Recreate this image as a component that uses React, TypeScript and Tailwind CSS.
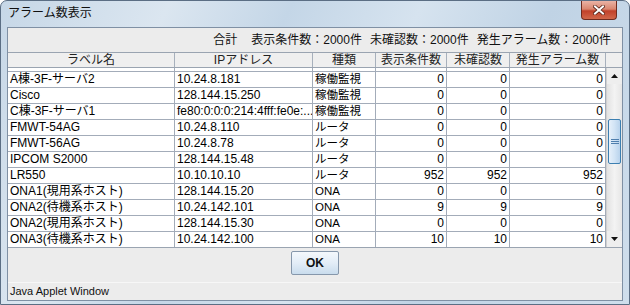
import React from 'react';

interface AlarmRow {
  label: string;
  ip: string;
  kind: string;
  shown: number;
  unconfirmed: number;
  alarms: number;
}

const rows: AlarmRow[] = [
  { label: 'A棟-3F-サーバ2', ip: '10.24.8.79', kind: '稼働監視', shown: 0, unconfirmed: 0, alarms: 0 },
  { label: 'A棟-3F-サーバ2', ip: '10.24.8.181', kind: '稼働監視', shown: 0, unconfirmed: 0, alarms: 0 },
  { label: 'Cisco', ip: '128.144.15.250', kind: '稼働監視', shown: 0, unconfirmed: 0, alarms: 0 },
  { label: 'C棟-3F-サーバ1', ip: 'fe80:0:0:0:214:4fff:fe0e:...', kind: '稼働監視', shown: 0, unconfirmed: 0, alarms: 0 },
  { label: 'FMWT-54AG', ip: '10.24.8.110', kind: 'ルータ', shown: 0, unconfirmed: 0, alarms: 0 },
  { label: 'FMWT-56AG', ip: '10.24.8.78', kind: 'ルータ', shown: 0, unconfirmed: 0, alarms: 0 },
  { label: 'IPCOM S2000', ip: '128.144.15.48', kind: 'ルータ', shown: 0, unconfirmed: 0, alarms: 0 },
  { label: 'LR550', ip: '10.10.10.10', kind: 'ルータ', shown: 952, unconfirmed: 952, alarms: 952 },
  { label: 'ONA1(現用系ホスト)', ip: '128.144.15.20', kind: 'ONA', shown: 0, unconfirmed: 0, alarms: 0 },
  { label: 'ONA2(待機系ホスト)', ip: '10.24.142.101', kind: 'ONA', shown: 9, unconfirmed: 9, alarms: 9 },
  { label: 'ONA2(現用系ホスト)', ip: '128.144.15.30', kind: 'ONA', shown: 0, unconfirmed: 0, alarms: 0 },
  { label: 'ONA3(待機系ホスト)', ip: '10.24.142.100', kind: 'ONA', shown: 10, unconfirmed: 10, alarms: 10 },
];

const headers = ['ラベル名', 'IPアドレス', '種類', '表示条件数', '未確認数', '発生アラーム数'];
const widths = ['w-[167px]', 'w-[138px]', 'w-[63px]', 'w-[71px]', 'w-[63px]', 'w-[96px]'];

const App: React.FC = () => {
  return (
    <div className="w-[630px] h-[305px] flex flex-col rounded-t-[7px] border border-[#5b6e84] bg-[linear-gradient(115deg,#c6d7e7_0%,#dbe6f0_22%,#c4d6e7_38%,#d6e3ef_55%,#c0d3e5_72%,#cfdeec_100%)] font-[family-name:'Liberation_Sans','Noto_Sans_CJK_JP',sans-serif] text-black overflow-hidden">
      {/* title bar */}
      <div className="h-[26px] flex items-start justify-between shrink-0">
        <div className="pl-[7px] pt-[4px] text-[12px] leading-[16px] text-[#101010]">アラーム数表示</div>
        <div className="mr-[12px] w-[36px] h-[19px] rounded-b-[4px] border border-t-0 border-[#6e2b1f] bg-[linear-gradient(180deg,#eab3a5_0%,#d9866f_45%,#c1412a_55%,#d1674a_100%)] flex items-center justify-center">
          <svg width="12" height="10" viewBox="0 0 12 10">
            <path d="M2 1.5 L10 8.5 M10 1.5 L2 8.5" stroke="#5a2418" strokeWidth="3.6" strokeLinecap="square" />
            <path d="M2 1.5 L10 8.5 M10 1.5 L2 8.5" stroke="#ffffff" strokeWidth="2" strokeLinecap="square" />
          </svg>
        </div>
      </div>

      {/* content panel */}
      <div className="mx-[6px] flex-1 flex flex-col border border-[#7f90a4] bg-[#ececec]">
        <div className="h-[24px] flex items-center justify-end pr-[11px] text-[12px] text-[#111]">
          <span className="mr-[14px]">合計</span>
          <div className="flex gap-[8px]">
            <span>表示条件数：2000件</span>
            <span>未確認数：2000件</span>
            <span>発生アラーム数：2000件</span>
          </div>
        </div>

        {/* table */}
        <div className="flex border-t border-[#9aa4b1]">
          <div className="flex flex-col">
            <div className="flex h-[15px] border-b border-[#9aa4b1] bg-[#efefef]">
              {headers.map((h, i) => (
                <div
                  key={h}
                  className={`${widths[i]} border-r border-[#a7b0bc] text-center text-[12px] leading-[14px] text-[#222] overflow-hidden`}
                >
                  {h}
                </div>
              ))}
            </div>
            <div className="h-[179px] overflow-hidden bg-white">
              {rows.map((r, idx) => (
                <div
                  key={idx}
                  className={`flex h-[16px] border-b border-[#a3acb9] text-[12px] leading-[15px] ${idx === 0 ? '-mt-[12px]' : ''}`}
                >
                  <div className="w-[167px] border-r border-[#a3acb9] pl-[2px] whitespace-nowrap overflow-hidden">{r.label}</div>
                  <div className="w-[138px] border-r border-[#a3acb9] pl-[2px] whitespace-nowrap overflow-hidden">{r.ip}</div>
                  <div className="w-[63px] border-r border-[#a3acb9] pl-[2px] whitespace-nowrap overflow-hidden text-[11.5px]">{r.kind}</div>
                  <div className="w-[71px] border-r border-[#a3acb9] pr-[2px] text-right">{r.shown}</div>
                  <div className="w-[63px] border-r border-[#a3acb9] pr-[2px] text-right">{r.unconfirmed}</div>
                  <div className="w-[96px] border-r border-[#a3acb9] pr-[2px] text-right">{r.alarms}</div>
                </div>
              ))}
            </div>
          </div>

          {/* scrollbar column */}
          <div className="w-[16px] flex flex-col">
            <div className="h-[15px] border-b border-[#9aa4b1] bg-[#efefef]" />
            <div className="flex-1 flex flex-col bg-[linear-gradient(90deg,#e2e2e2,#f3f3f3_50%,#e6e6e6)] border-l border-[#d0d0d0]">
              <div className="h-[16px] flex items-center justify-center bg-[#eeeeee]">
                <svg width="7" height="4" viewBox="0 0 7 4">
                  <path d="M0 4 L3.5 0 L7 4 Z" fill="#111" />
                </svg>
              </div>
              <div className="h-[35px]" />
              <div className="h-[45px] mx-[1px] rounded-[2px] border border-[#3c7fb1] bg-[linear-gradient(90deg,#e6f0fa,#d2e4f5_50%,#b9d3ec)] flex items-center justify-center">
                <svg width="8" height="6" viewBox="0 0 8 6">
                  <path d="M0 0.5 H8 M0 2.5 H8 M0 4.5 H8" stroke="#4f7fae" strokeWidth="1" />
                </svg>
              </div>
              <div className="flex-1" />
              <div className="h-[16px] flex items-center justify-center bg-[#eeeeee]">
                <svg width="7" height="4" viewBox="0 0 7 4">
                  <path d="M0 0 L3.5 4 L7 0 Z" fill="#111" />
                </svg>
              </div>
            </div>
          </div>
        </div>

        {/* button area */}
        <div className="flex justify-center pt-[3px] h-[35px] border-t border-[#9aa4b1]">
          <button className="w-[48px] h-[24px] rounded-[2px] border border-[#8697ab] bg-[linear-gradient(180deg,#f4f8fc_0%,#e3edf7_50%,#c9dced_100%)] text-[12px] font-bold text-[#111]">
            OK
          </button>
        </div>
        <div className="flex-1 flex items-center pl-[2px] text-[11px] text-[#111] border-t border-[#f7f7f7]">
          Java Applet Window
        </div>
      </div>
      <div className="h-[7px] shrink-0 border-b-[2px] border-[#4b8cc0]" />
    </div>
  );
};

export default App;
